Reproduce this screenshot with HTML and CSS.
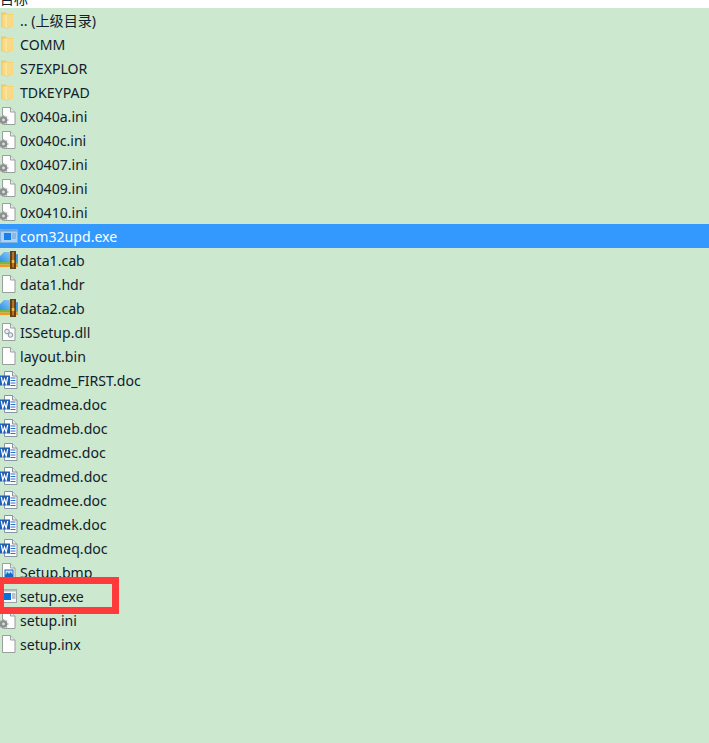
FILE: index.html
```html
<!DOCTYPE html>
<html lang="zh-CN">
<head>
<meta charset="utf-8">
<title>目标</title>
<link rel="stylesheet" href="styles.css">
</head>
<body>
<svg class="defs" width="0" height="0" aria-hidden="true">
  <defs>
    <linearGradient id="fold" x1="0" y1="0" x2="1" y2="0"><stop offset="0" stop-color="#f4cf68"/><stop offset="1" stop-color="#fde9ad"/></linearGradient>
    <linearGradient id="sky" x1="0" y1="1" x2="1" y2="0"><stop offset="0" stop-color="#2f90e0"/><stop offset="1" stop-color="#8ccbf5"/></linearGradient>
    <symbol id="i-folder" viewBox="0 0 18 18">
      <path d="M1 1.500h5l1 1.500h6v12.500L7 17.500 1 16z" fill="#f3c95e"/>
      <path d="M1.500 3.500h6v13.500L1.500 15.500z" fill="url(#fold)"/>
      <path d="M7.500 3.500h5.500v12l-5.500 1.500z" fill="#f9d983"/>
    </symbol>
    <symbol id="i-page" viewBox="0 0 18 18">
      <path d="M2.500.5h8l4.500 4.500v12.500H2.500z" fill="#fdfefd" stroke="#989e9c"/>
      <path d="M10.500.5V5H15" fill="#e8ecea" stroke="#989e9c"/>
    </symbol>
    <symbol id="i-ini" viewBox="0 0 18 18">
      <use href="#i-page" width="18" height="18"/>
      <path d="M3.500 8v10M-1.500 13h10M0 9.500l7 7M7 9.500l-7 7" stroke="#b3b7b6" stroke-width="1.600"/>
      <circle cx="3.500" cy="13" r="3.800" fill="#8b8f8e"/>
      <circle cx="3.500" cy="13" r="1.400" fill="#dcdfde"/>
    </symbol>
    <symbol id="i-dll" viewBox="0 0 18 18">
      <use href="#i-page" width="18" height="18"/>
      <circle cx="7" cy="8.500" r="2.300" fill="#e8ecec" stroke="#8b9396"/>
      <circle cx="10.500" cy="12" r="2.300" fill="#dfe8ee" stroke="#7f95a6"/>
    </symbol>
    <symbol id="i-appsel" viewBox="0 0 18 18">
      <rect x=".5" y="2.500" width="17" height="13" fill="#a9d2f8" stroke="#7fb0de"/>
      <rect x=".5" y="2.500" width="17" height="2" fill="#6fa3d6"/>
      <rect x="4" y="6" width="7" height="7" fill="#1a7fea"/>
      <path d="M12 7h4M12 9h4M12 11h4" stroke="#6f9fcc"/>
    </symbol>
    <symbol id="i-app" viewBox="0 0 18 18">
      <rect x="3.500" y="2.500" width="13" height="13" fill="#f7f9f9" stroke="#9aa2a6"/>
      <rect x="3.500" y="2.500" width="13" height="2" fill="#b4bcc2"/>
      <rect x="4" y="6" width="7" height="7" fill="#0d6fdc"/>
      <path d="M12 7h3.500M12 9h3.500M12 11h3.500" stroke="#7f8b92"/>
    </symbol>
    <symbol id="i-cab" viewBox="0 0 18 18">
      <path d="M0 5l4-4h6l1 1v9.500H0z" fill="url(#sky)"/>
      <path d="M0 11h18v2.500H0z" fill="#7cb83a"/>
      <path d="M0 13.500h18V16H0z" fill="#ef9a24"/>
      <path d="M12 4l6-1v8.500h-6z" fill="#3f9be6"/>
      <rect x="10" y="0" width="6" height="18" fill="#6b3f14"/>
      <rect x="12.300" y="1" width="1.500" height="15.500" fill="#c58a3c"/>
      <rect x="11.800" y="9" width="2.500" height="3" fill="#f2c14a"/>
    </symbol>
    <symbol id="i-doc" viewBox="0 0 18 18">
      <path d="M4.500.5h8l4.500 4.500v12.500H4.500z" fill="#fbfdfe" stroke="#8795a3"/>
      <path d="M12.500.5V5H17" fill="#e4eaee" stroke="#8795a3"/>
      <path d="M10.500 7h5M10.500 9.500h5M10.500 12h5M10.500 14.500h5" stroke="#2f74c8"/>
      <rect x="0" y="4.500" width="10" height="10" fill="#1f5fb4"/>
      <path d="M1.300 6l1.500 7 1.700-5 1.700 5 1.500-7" fill="none" stroke="#fff" stroke-width="1.200"/>
    </symbol>
    <symbol id="i-bmp" viewBox="0 0 18 18">
      <use href="#i-page" width="18" height="18"/>
      <rect x="4.500" y="6.500" width="9" height="8" fill="#1469c4"/>
      <path d="M5.500 12l2-3 1.500 2 1.500-2 2 2.500V7.500h-7z" fill="#bfe3f8"/>
    </symbol>
  </defs>
</svg>

<header class="title-strip"><span class="title-text">目标</span></header>

<main class="list-pane">
  <ul class="file-list">
    <li class="file-row"><svg class="icon"><use href="#i-folder"/></svg><span class="name">.. (上级目录)</span></li>
    <li class="file-row"><svg class="icon"><use href="#i-folder"/></svg><span class="name">COMM</span></li>
    <li class="file-row"><svg class="icon"><use href="#i-folder"/></svg><span class="name">S7EXPLOR</span></li>
    <li class="file-row"><svg class="icon"><use href="#i-folder"/></svg><span class="name">TDKEYPAD</span></li>
    <li class="file-row"><svg class="icon"><use href="#i-ini"/></svg><span class="name">0x040a.ini</span></li>
    <li class="file-row"><svg class="icon"><use href="#i-ini"/></svg><span class="name">0x040c.ini</span></li>
    <li class="file-row"><svg class="icon"><use href="#i-ini"/></svg><span class="name">0x0407.ini</span></li>
    <li class="file-row"><svg class="icon"><use href="#i-ini"/></svg><span class="name">0x0409.ini</span></li>
    <li class="file-row"><svg class="icon"><use href="#i-ini"/></svg><span class="name">0x0410.ini</span></li>
    <li class="file-row is-selected"><svg class="icon"><use href="#i-appsel"/></svg><span class="name">com32upd.exe</span></li>
    <li class="file-row"><svg class="icon"><use href="#i-cab"/></svg><span class="name">data1.cab</span></li>
    <li class="file-row"><svg class="icon"><use href="#i-page"/></svg><span class="name">data1.hdr</span></li>
    <li class="file-row"><svg class="icon"><use href="#i-cab"/></svg><span class="name">data2.cab</span></li>
    <li class="file-row"><svg class="icon"><use href="#i-dll"/></svg><span class="name">ISSetup.dll</span></li>
    <li class="file-row"><svg class="icon"><use href="#i-page"/></svg><span class="name">layout.bin</span></li>
    <li class="file-row"><svg class="icon"><use href="#i-doc"/></svg><span class="name">readme_FIRST.doc</span></li>
    <li class="file-row"><svg class="icon"><use href="#i-doc"/></svg><span class="name">readmea.doc</span></li>
    <li class="file-row"><svg class="icon"><use href="#i-doc"/></svg><span class="name">readmeb.doc</span></li>
    <li class="file-row"><svg class="icon"><use href="#i-doc"/></svg><span class="name">readmec.doc</span></li>
    <li class="file-row"><svg class="icon"><use href="#i-doc"/></svg><span class="name">readmed.doc</span></li>
    <li class="file-row"><svg class="icon"><use href="#i-doc"/></svg><span class="name">readmee.doc</span></li>
    <li class="file-row"><svg class="icon"><use href="#i-doc"/></svg><span class="name">readmek.doc</span></li>
    <li class="file-row"><svg class="icon"><use href="#i-doc"/></svg><span class="name">readmeq.doc</span></li>
    <li class="file-row"><svg class="icon"><use href="#i-bmp"/></svg><span class="name">Setup.bmp</span></li>
    <li class="file-row"><svg class="icon"><use href="#i-app"/></svg><span class="name">setup.exe</span></li>
    <li class="file-row"><svg class="icon"><use href="#i-ini"/></svg><span class="name">setup.ini</span></li>
    <li class="file-row"><svg class="icon"><use href="#i-page"/></svg><span class="name">setup.inx</span></li>
  </ul>
  <div class="annotation"></div>
</main>
</body>
</html>
```

FILE: styles.css
```css
html, body {
  margin: 0;
  padding: 0;
  height: 100%;
  overflow: hidden;
  background: #fff;
}
body {
  display: flex;
  flex-direction: column;
  font-family: "Noto Sans", "Noto Sans CJK SC", sans-serif;
  font-size: 14.1px;
  color: #10202c;
}
.defs {
  position: absolute;
}
.title-strip {
  flex: 0 0 8px;
  height: 8px;
  overflow: hidden;
  background: #fff;
}
.title-text {
  display: block;
  margin-top: -9px;
  line-height: 14px;
  font-size: 14px;
  font-family: "Noto Sans CJK SC", sans-serif;
}
.list-pane {
  position: relative;
  flex: 1;
  background: #cce8cf;
}
.file-list {
  list-style: none;
  margin: 0;
  padding: 0;
}
.file-row {
  display: flex;
  align-items: center;
  gap: 2px;
  height: 24px;
  white-space: nowrap;
}
.is-selected {
  background: #3399ff;
  color: #fff;
}
.icon {
  flex: 0 0 18px;
  width: 18px;
  height: 18px;
}
.name {
  padding-top: 1px;
  line-height: 24px;
}
.annotation {
  position: absolute;
  left: -3px;
  top: 569px;
  width: 108px;
  height: 23px;
  border: 7px solid #fe3a3a;
  pointer-events: none;
}
```
